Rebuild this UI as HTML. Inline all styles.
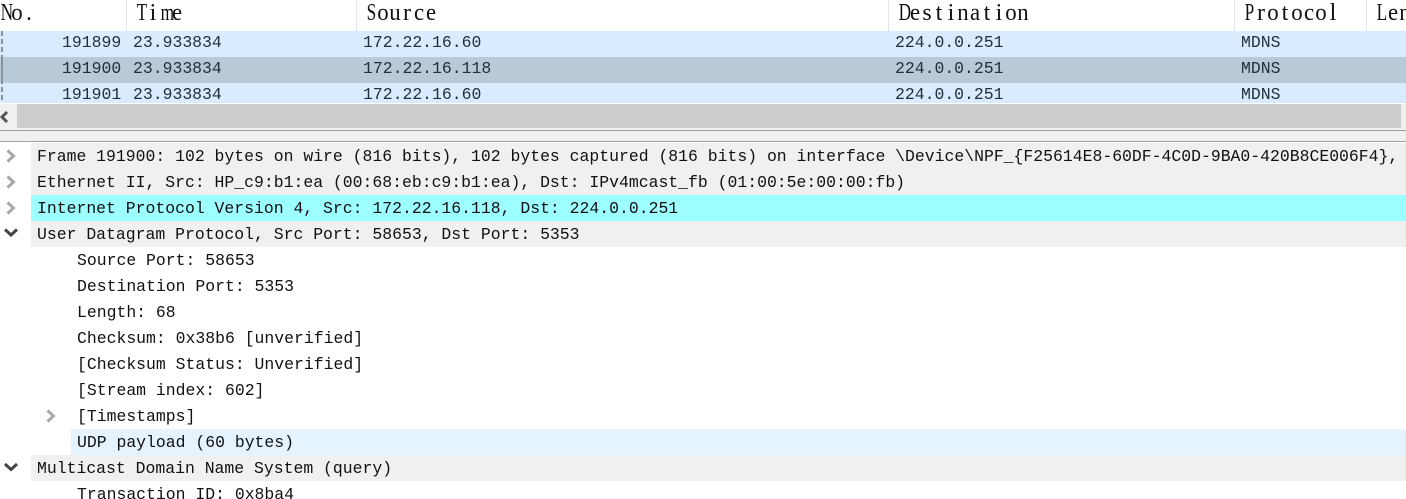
<!DOCTYPE html>
<html><head><meta charset="utf-8"><style>
html,body{margin:0;padding:0;background:#fff}
#p{position:relative;width:1406px;height:499px;overflow:hidden;background:#fff;font-family:"Liberation Mono",monospace;font-size:16.45px;color:#111}
#p div{position:absolute}
.h{top:0;height:31px;line-height:27px;font-family:"Liberation Serif",serif;font-size:24px;color:#111;white-space:nowrap}
.h span{display:inline-block;width:12px;text-align:center;transform:scaleX(.95)}
.h span.w{transform:scaleX(.72)}
.h span.n{transform:none}
.sep{top:0;width:1px;height:31px;background:#e4e4e4}
.r{left:0;width:1406px;height:26px}
.t{white-space:pre;line-height:26px;height:26px}
.l{color:#20303c}
.rw{left:31px;width:1375px;height:26px}
svg{position:absolute;overflow:visible}
</style></head><body><div id="p">
<div class="h" style="left:-1px"><span class="w">N</span><span>o</span><span>.</span></div>
<div class="h" style="left:135px"><span class="w">T</span><span class="n">i</span><span class="w">m</span><span>e</span></div>
<div class="h" style="left:365px"><span class="w">S</span><span>o</span><span>u</span><span class="n">r</span><span>c</span><span>e</span></div>
<div class="h" style="left:897px"><span class="w">D</span><span>e</span><span class="n">s</span><span class="n">t</span><span class="n">i</span><span>n</span><span>a</span><span class="n">t</span><span class="n">i</span><span>o</span><span>n</span></div>
<div class="h" style="left:1243px"><span class="w">P</span><span class="n">r</span><span>o</span><span class="n">t</span><span>o</span><span>c</span><span>o</span><span class="n">l</span></div>
<div class="h" style="left:1375px"><span class="w">L</span><span>e</span><span>n</span></div>
<div class="sep" style="left:126px"></div><div class="sep" style="left:356px"></div><div class="sep" style="left:888px"></div><div class="sep" style="left:1234px"></div><div class="sep" style="left:1366px"></div>

<div class="r" style="top:31px;background:#d9ebff"></div>
<div class="r" style="top:57px;background:#b8c9d8"></div>
<div class="r" style="top:83px;height:20px;background:#d9ebff;overflow:hidden"></div>
<div style="left:1px;top:31px;width:2px;height:72px;background:repeating-linear-gradient(#8a9299 0 5px,transparent 5px 8px)"></div>
<div style="left:1px;top:56px;width:2px;height:27px;background:#8a9299"></div>

<div class="t l" style="left:62px;top:30px">191899</div><div class="t l" style="left:133px;top:30px">23.933834</div><div class="t l" style="left:363px;top:30px">172.22.16.60</div><div class="t l" style="left:895px;top:30px">224.0.0.251</div><div class="t l" style="left:1241px;top:30px">MDNS</div>
<div class="t l" style="left:62px;top:56px">191900</div><div class="t l" style="left:133px;top:56px">23.933834</div><div class="t l" style="left:363px;top:56px">172.22.16.118</div><div class="t l" style="left:895px;top:56px">224.0.0.251</div><div class="t l" style="left:1241px;top:56px">MDNS</div>
<div style="left:0;top:83px;width:1406px;height:20px;overflow:hidden">
<div class="t l" style="left:62px;top:-1px">191901</div><div class="t l" style="left:133px;top:-1px">23.933834</div><div class="t l" style="left:363px;top:-1px">172.22.16.60</div><div class="t l" style="left:895px;top:-1px">224.0.0.251</div><div class="t l" style="left:1241px;top:-1px">MDNS</div>
</div>

<div style="left:0;top:104px;width:1406px;height:37px;background:#f0f0f0"></div>
<div style="left:17px;top:104px;width:1384px;height:24px;background:#cdcdcd"></div>
<svg style="left:0;top:0" width="17" height="130"><path d="M7 112 L2 117 L7 122" fill="none" stroke="#555" stroke-width="3"/></svg>
<div style="left:0;top:130px;width:1406px;height:1px;background:#a0a0a0"></div>
<div style="left:0;top:141px;width:1406px;height:1px;background:#a0a0a0"></div>

<div class="rw" style="top:143px;background:#f0f0f0"></div>
<div class="rw" style="top:169px;background:#f0f0f0"></div>
<div class="rw" style="top:195px;background:#9dffff"></div>
<div class="rw" style="top:221px;background:#f0f0f0"></div>
<div style="left:71px;top:429px;width:1335px;height:26px;background:#e5f3ff"></div>
<div class="rw" style="top:455px;background:#f0f0f0"></div>

<svg style="left:0;top:0" width="60" height="499">
<g fill="none" stroke="#a8a8a8" stroke-width="3">
<path d="M7.500 150.500 L13.500 156 L7.500 161.500"/><path d="M7.500 176.500 L13.500 182 L7.500 187.500"/><path d="M7.500 202.500 L13.500 208 L7.500 213.500"/><path d="M47.500 410.500 L53.500 416 L47.500 421.500"/>
</g>
<g fill="none" stroke="#444" stroke-width="3">
<path d="M5 229.500 L11 235 L17 229.500"/><path d="M5 464 L11 469.500 L17 464"/>
</g>
</svg>

<div class="t" style="left:37px;top:144px">Frame 191900: 102 bytes on wire (816 bits), 102 bytes captured (816 bits) on interface \Device\NPF_{F25614E8-60DF-4C0D-9BA0-420B8CE006F4},</div>
<div class="t" style="left:37px;top:170px">Ethernet II, Src: HP_c9:b1:ea (00:68:eb:c9:b1:ea), Dst: IPv4mcast_fb (01:00:5e:00:00:fb)</div>
<div class="t" style="left:37px;top:196px">Internet Protocol Version 4, Src: 172.22.16.118, Dst: 224.0.0.251</div>
<div class="t" style="left:37px;top:222px">User Datagram Protocol, Src Port: 58653, Dst Port: 5353</div>
<div class="t" style="left:77px;top:248px">Source Port: 58653</div>
<div class="t" style="left:77px;top:274px">Destination Port: 5353</div>
<div class="t" style="left:77px;top:300px">Length: 68</div>
<div class="t" style="left:77px;top:326px">Checksum: 0x38b6 [unverified]</div>
<div class="t" style="left:77px;top:352px">[Checksum Status: Unverified]</div>
<div class="t" style="left:77px;top:378px">[Stream index: 602]</div>
<div class="t" style="left:77px;top:404px">[Timestamps]</div>
<div class="t" style="left:77px;top:430px">UDP payload (60 bytes)</div>
<div class="t" style="left:37px;top:456px">Multicast Domain Name System (query)</div>
<div class="t" style="left:77px;top:482px">Transaction ID: 0x8ba4</div>
</div></body></html>
